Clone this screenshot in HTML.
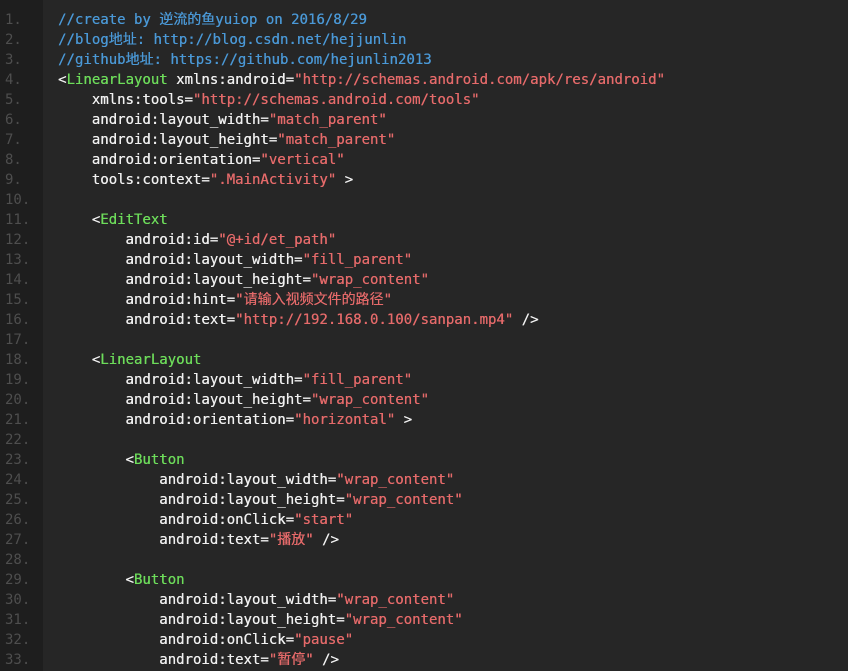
<!DOCTYPE html>
<html><head><meta charset="utf-8"><style>
html,body{margin:0;padding:0;width:848px;height:671px;overflow:hidden;background:#262626;}
.g{position:absolute;left:0;top:0;width:43px;height:671px;background:#1e1e1e;}
.w{position:absolute;left:0;top:10px;font-family:"DejaVu Sans Mono","Liberation Mono","Noto Sans CJK SC",monospace;font-size:14px;line-height:20px;}
.l{height:20px;white-space:pre;position:relative;}
.n{position:absolute;left:5px;color:#4e4e4e;}
.c{position:absolute;left:58px;color:#f0f0f0;text-shadow:0.3px 0 0 currentColor;}
.m{color:#4a98d6;}
.t{color:#6ddc5a;}
.s{color:#e56a6a;}
</style></head><body><div class="g"></div><div class="w">
<div class="l"><span class="n">1.</span><span class="c"><span class="m">//create by 逆流的鱼yuiop on 2016/8/29</span></span></div>
<div class="l"><span class="n">2.</span><span class="c"><span class="m">//blog地址: http://blog.csdn.net/hejjunlin</span></span></div>
<div class="l"><span class="n">3.</span><span class="c"><span class="m">//github地址: https://github.com/hejunlin2013</span></span></div>
<div class="l"><span class="n">4.</span><span class="c">&lt;<span class="t">LinearLayout</span> xmlns:android=<span class="s">"http://schemas.android.com/apk/res/android"</span></span></div>
<div class="l"><span class="n">5.</span><span class="c">    xmlns:tools=<span class="s">"http://schemas.android.com/tools"</span></span></div>
<div class="l"><span class="n">6.</span><span class="c">    android:layout_width=<span class="s">"match_parent"</span></span></div>
<div class="l"><span class="n">7.</span><span class="c">    android:layout_height=<span class="s">"match_parent"</span></span></div>
<div class="l"><span class="n">8.</span><span class="c">    android:orientation=<span class="s">"vertical"</span></span></div>
<div class="l"><span class="n">9.</span><span class="c">    tools:context=<span class="s">".MainActivity"</span> &gt;</span></div>
<div class="l"><span class="n">10.</span><span class="c"></span></div>
<div class="l"><span class="n">11.</span><span class="c">    &lt;<span class="t">EditText</span></span></div>
<div class="l"><span class="n">12.</span><span class="c">        android:id=<span class="s">"@+id/et_path"</span></span></div>
<div class="l"><span class="n">13.</span><span class="c">        android:layout_width=<span class="s">"fill_parent"</span></span></div>
<div class="l"><span class="n">14.</span><span class="c">        android:layout_height=<span class="s">"wrap_content"</span></span></div>
<div class="l"><span class="n">15.</span><span class="c">        android:hint=<span class="s">"请输入视频文件的路径"</span></span></div>
<div class="l"><span class="n">16.</span><span class="c">        android:text=<span class="s">"http://192.168.0.100/sanpan.mp4"</span> /&gt;</span></div>
<div class="l"><span class="n">17.</span><span class="c"></span></div>
<div class="l"><span class="n">18.</span><span class="c">    &lt;<span class="t">LinearLayout</span></span></div>
<div class="l"><span class="n">19.</span><span class="c">        android:layout_width=<span class="s">"fill_parent"</span></span></div>
<div class="l"><span class="n">20.</span><span class="c">        android:layout_height=<span class="s">"wrap_content"</span></span></div>
<div class="l"><span class="n">21.</span><span class="c">        android:orientation=<span class="s">"horizontal"</span> &gt;</span></div>
<div class="l"><span class="n">22.</span><span class="c"></span></div>
<div class="l"><span class="n">23.</span><span class="c">        &lt;<span class="t">Button</span></span></div>
<div class="l"><span class="n">24.</span><span class="c">            android:layout_width=<span class="s">"wrap_content"</span></span></div>
<div class="l"><span class="n">25.</span><span class="c">            android:layout_height=<span class="s">"wrap_content"</span></span></div>
<div class="l"><span class="n">26.</span><span class="c">            android:onClick=<span class="s">"start"</span></span></div>
<div class="l"><span class="n">27.</span><span class="c">            android:text=<span class="s">"播放"</span> /&gt;</span></div>
<div class="l"><span class="n">28.</span><span class="c"></span></div>
<div class="l"><span class="n">29.</span><span class="c">        &lt;<span class="t">Button</span></span></div>
<div class="l"><span class="n">30.</span><span class="c">            android:layout_width=<span class="s">"wrap_content"</span></span></div>
<div class="l"><span class="n">31.</span><span class="c">            android:layout_height=<span class="s">"wrap_content"</span></span></div>
<div class="l"><span class="n">32.</span><span class="c">            android:onClick=<span class="s">"pause"</span></span></div>
<div class="l"><span class="n">33.</span><span class="c">            android:text=<span class="s">"暂停"</span> /&gt;</span></div>
</div></body></html>
